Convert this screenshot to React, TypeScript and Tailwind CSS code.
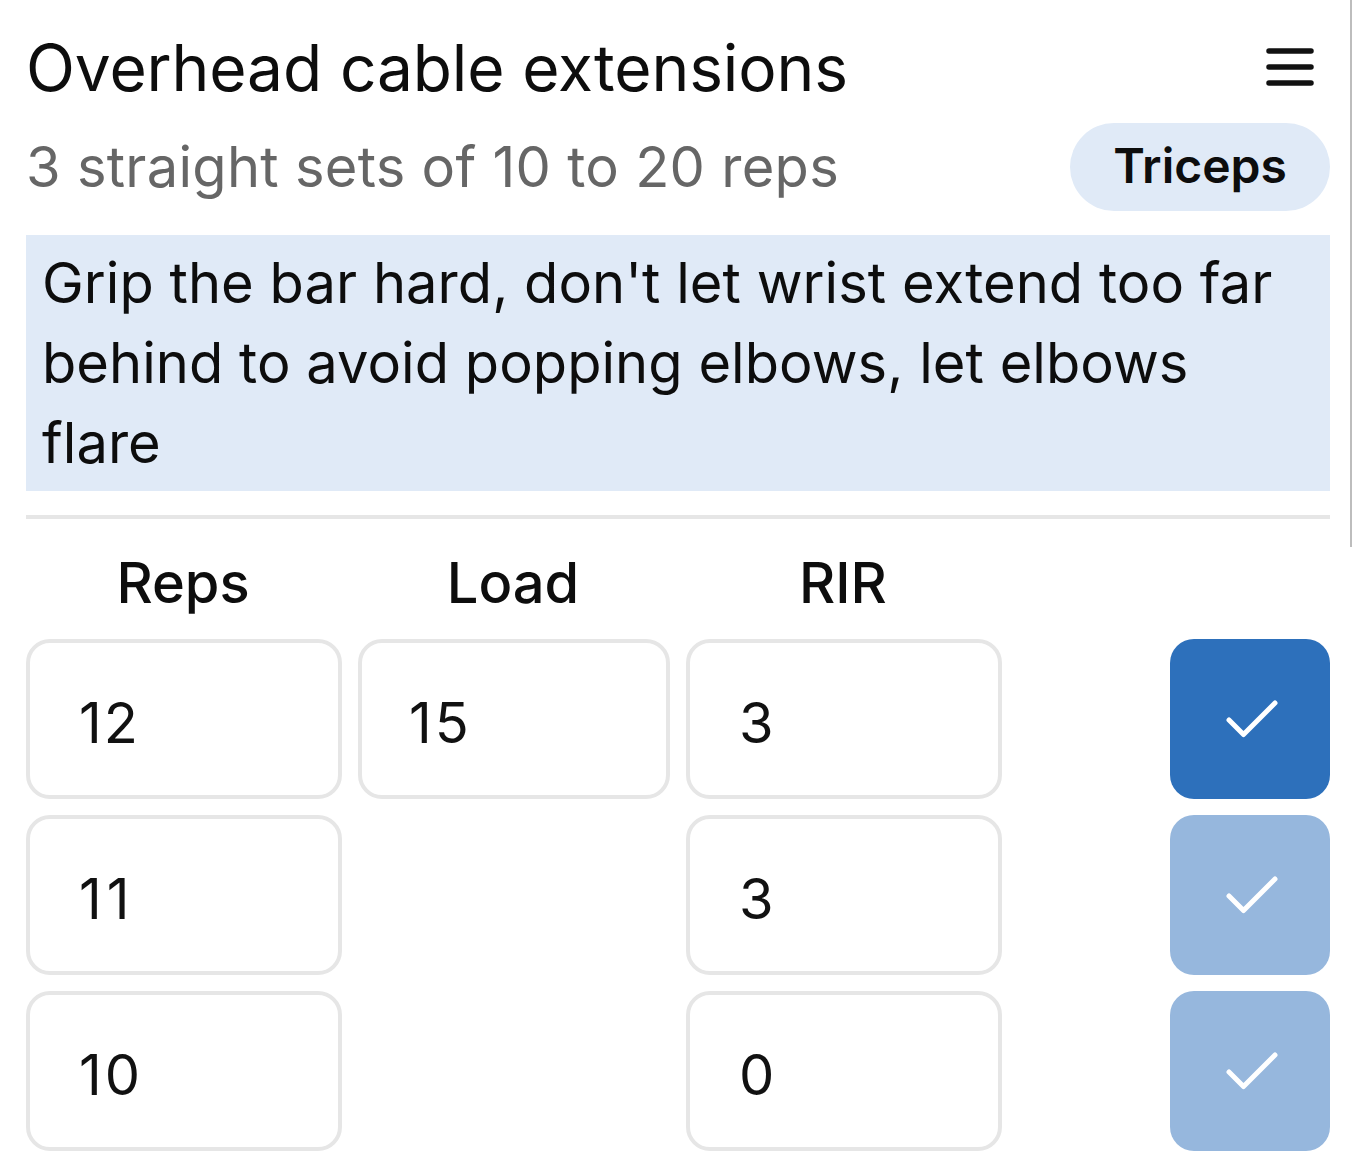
const rows = [
  { reps: "12", repsTrack: "tracking-[2px]", load: "15", rir: "3", active: true },
  { reps: "11", repsTrack: "tracking-[5px]", load: "", rir: "3", active: false },
  { reps: "10", repsTrack: "tracking-[3px]", load: "", rir: "0", active: false },
];

function Check() {
  return (
    <svg className="ml-[4px]" width="52" height="38" viewBox="0 0 52 38" fill="none" stroke="#ffffff" strokeWidth="5" strokeLinecap="round" strokeLinejoin="round">
      <path d="M3 20 L17.5 34.5 L49 3" />
    </svg>
  );
}

function Cell({ value, className }: { value: string; className: string }) {
  return (
    <div className={`flex h-[160px] items-center rounded-[24px] border-4 border-[#e6e6e6] bg-white pt-[8px] text-[56px] text-[#111111] ${className}`}>
      {value}
    </div>
  );
}

export default function App() {
  return (
    <div className="relative h-[1172px] w-[1352px] overflow-hidden bg-white font-['Inter',sans-serif] text-[#0d0d0d]">
      <div className="absolute right-0 top-0 h-[547px] w-[2px] bg-[#bdbdbd]" />
      <div className="pl-[26px] pr-[22px] pt-[26px]">
        <div className="flex h-[84px] items-center justify-between pr-[16px]">
          <h1 className="text-[64px] font-normal leading-[84px] tracking-[-0.12px]">Overhead cable extensions</h1>
          <svg width="48" height="40" viewBox="0 0 48 40" fill="none" stroke="#111111" strokeWidth="5.5" strokeLinecap="round">
            <path d="M3 3 H45 M3 19 H45 M3 35 H45" />
          </svg>
        </div>
        <div className="mt-[13px] flex h-[88px] items-center justify-between">
          <p className="text-[56px] leading-[80px] tracking-[0.28px] text-[#666666]">3 straight sets of 10 to 20 reps</p>
          <span className="flex h-[88px] w-[260px] items-center justify-center rounded-full bg-[#e0eaf7] pb-[2px] text-[48px] font-semibold text-[#0d0d0d]">Triceps</span>
        </div>
        <p className="mt-[24px] h-[256px] bg-[#e0eaf7] px-[16px] pt-[8px] text-[56px] leading-[80px] tracking-[0.05px]">
          Grip the bar hard, don't let wrist extend too far behind to avoid popping elbows, let elbows flare
        </p>
        <div className="mt-[24px] h-[4px] bg-[#e6e6e6]" />
        <div className="mt-[24px] grid grid-cols-[316px_312px_316px_1fr_160px] gap-x-4 gap-y-4">
          <div className="h-[80px] pr-[2px] text-center text-[56px] font-medium leading-[80px]">Reps</div>
          <div className="h-[80px] pr-[2px] text-center text-[56px] font-medium leading-[80px]">Load</div>
          <div className="h-[80px] pr-[2px] text-center text-[56px] font-medium leading-[80px]">RIR</div>
          <div />
          <div />
          {rows.map((r) => (
            <div key={r.reps} className="contents">
              <Cell value={r.reps} className={`pl-[49px] ${r.repsTrack}`} />
              {r.load ? <Cell value={r.load} className="pl-[47px] tracking-[3px]" /> : <div />}
              <Cell value={r.rir} className="pl-[49px]" />
              <div />
              <div className={`flex h-[160px] items-center justify-center rounded-[24px] ${r.active ? "bg-[#2d70bb]" : "bg-[#96b7dd]"}`}>
                <Check />
              </div>
            </div>
          ))}
        </div>
      </div>
    </div>
  );
}
